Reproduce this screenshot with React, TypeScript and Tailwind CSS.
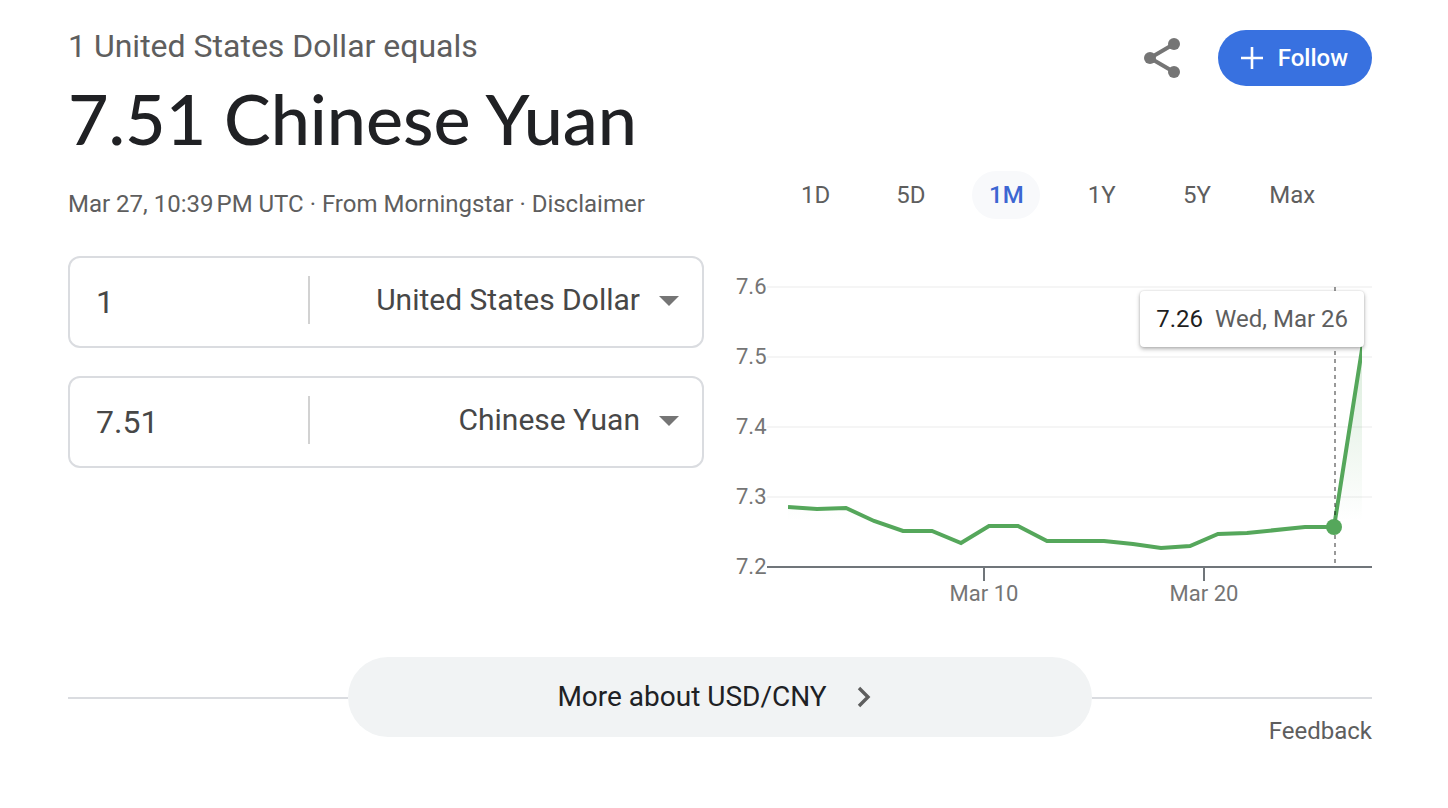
import React, { useState } from 'react';

interface CurrencyFieldProps {
  id: string;
  label: string;
  amount: string;
  currency: string;
}

const CURRENCIES = ['United States Dollar', 'Chinese Yuan', 'Euro', 'Japanese Yen'];
const RANGES = ['1D', '5D', '1M', '1Y', '5Y', 'Max'];

// Horizontal grid lines of the chart, top to bottom
const Y_TICKS = [
  { label: '7.6', y: 28 },
  { label: '7.5', y: 98 },
  { label: '7.4', y: 168 },
  { label: '7.3', y: 238 },
  { label: '7.2', y: 308 },
];

const X_TICKS = [
  { label: 'Mar 10', x: 248 },
  { label: 'Mar 20', x: 468 },
];

const RATE_POINTS =
  '52,248 81,250 110,249 138,262 167,272 196,272 225,284 253,267 282,267 311,282 368,282 397,285 425,289 454,287 482,275 511,274 569,268 598,268 627,84';

const CurrencyField: React.FC<CurrencyFieldProps> = ({ id, label, amount, currency }) => {
  const [value, setValue] = useState(amount);
  const [selected, setSelected] = useState(currency);

  return (
    <div className="flex h-[92px] items-center rounded-xl border-2 border-[#dadce0] pb-1">
      <input
        id={`${id}-amount`}
        aria-label={`${label} amount`}
        value={value}
        onChange={(e) => setValue(e.target.value)}
        className="h-full w-[238px] min-w-0 bg-transparent pt-1 pl-[26px] text-[32px] text-[#474747] outline-none"
      />
      <div className="h-12 w-0.5 shrink-0 bg-[#d2d2d2]" />
      <div className="relative h-full min-w-0 flex-1">
        <select
          id={`${id}-currency`}
          aria-label={`${label} currency`}
          value={selected}
          onChange={(e) => setSelected(e.target.value)}
          className="h-full w-full appearance-none bg-transparent pr-[62px] pb-0.5 text-right text-[30px] text-[#474747] outline-none [text-align-last:right]"
        >
          {CURRENCIES.map((name) => (
            <option key={name}>{name}</option>
          ))}
        </select>
        <svg
          className="pointer-events-none absolute top-0.5 right-[23px] bottom-0 my-auto h-2.5 w-5"
          viewBox="0 0 20 10"
          fill="#757575"
        >
          <path d="M0 0h20L10 10z" />
        </svg>
      </div>
    </div>
  );
};

const RateChart: React.FC = () => (
  <div className="relative">
    <svg className="block w-full" viewBox="0 0 636 360" role="img" aria-label="USD to CNY, 1 month">
      <defs>
        <linearGradient id="rate-fill" gradientUnits="userSpaceOnUse" x1="0" y1="84" x2="0" y2="262">
          <stop offset="0" stopColor="#55a75b" stopOpacity="0.22" />
          <stop offset="1" stopColor="#55a75b" stopOpacity="0" />
        </linearGradient>
        <clipPath id="rate-clip">
          <rect x="52" y="0" width="574" height="308" />
        </clipPath>
      </defs>

      {/* Grid and value labels */}
      {Y_TICKS.map(({ label, y }) => (
        <g key={label}>
          <line x1="31" x2="636" y1={y} y2={y} stroke={label === '7.2' ? '#70757a' : '#f5f5f5'} strokeWidth="2" />
          <text x="0" y={y + 7} fontSize="22" fill="#757575">
            {label}
          </text>
        </g>
      ))}

      {/* Date labels */}
      {X_TICKS.map(({ label, x }) => (
        <g key={label}>
          <line x1={x} x2={x} y1="308" y2="322" stroke="#70757a" strokeWidth="2" />
          <text x={x} y="342" fontSize="22" fill="#757575" textAnchor="middle">
            {label}
          </text>
        </g>
      ))}

      <g clipPath="url(#rate-clip)">
        <polygon points={`${RATE_POINTS} 627,308 52,308`} fill="url(#rate-fill)" />
        <polyline points={RATE_POINTS} fill="none" stroke="#55a75b" strokeWidth="4" />
      </g>

      {/* Crosshair */}
      <line x1="599" x2="599" y1="28" y2="304" stroke="#000" strokeOpacity="0.4" strokeWidth="2" strokeDasharray="4 4" />
      <circle cx="598" cy="268" r="8" fill="#55a75b" />
    </svg>

    <div className="absolute top-8 right-2 flex h-14 items-center gap-3 rounded bg-white px-4 text-2xl whitespace-nowrap shadow-[0_2px_4px_rgba(0,0,0,0.3),0_0_2px_rgba(0,0,0,0.15)]">
      <span className="text-[#1f1f1f]">7.26</span>
      <span className="text-[#5e5e5e]">Wed, Mar 26</span>
    </div>
  </div>
);

export default function App() {
  const [range, setRange] = useState('1M');

  return (
    <main className="bg-white pt-[26px] pr-[76px] pb-[61px] pl-[68px] font-[Roboto,sans-serif]">
      <div className="grid grid-cols-2 gap-8">
        {/* Converter */}
        <section>
          <p className="text-[32px] leading-10 text-[#5e5e5e]">1 United States Dollar equals</p>
          <h1 className="font-[Lato,sans-serif] text-[70px] leading-[104px] font-medium whitespace-nowrap text-[#202124]">
            7.51 Chinese Yuan
          </h1>
          <p className="mt-[18px] text-2xl leading-8 whitespace-nowrap text-[#5e5e5e]">
            Mar 27, 10:39{'\u202f'}PM UTC · From Morningstar · <a href="#disclaimer">Disclaimer</a>
          </p>
          <div className="mt-9 flex flex-col gap-7">
            <CurrencyField id="from" label="From" amount="1" currency="United States Dollar" />
            <CurrencyField id="to" label="To" amount="7.51" currency="Chinese Yuan" />
          </div>
        </section>

        {/* Actions, range picker and chart */}
        <section className="pt-1">
          <div className="flex items-center justify-end gap-8">
            <button type="button" aria-label="Share" className="size-12">
              <svg viewBox="0 0 48 48" fill="#757575" stroke="#757575">
                <path d="M36 10 12 24l24 14" fill="none" strokeWidth="4" />
                <circle cx="36" cy="10" r="6" stroke="none" />
                <circle cx="12" cy="24" r="6" stroke="none" />
                <circle cx="36" cy="38" r="6" stroke="none" />
              </svg>
            </button>
            <button
              type="button"
              className="flex h-14 items-center gap-[15px] rounded-full bg-[#3871e0] pr-6 pl-[23px] text-2xl font-medium text-white"
            >
              <svg className="size-[22px]" viewBox="0 0 22 22" stroke="currentColor" strokeWidth="2.6">
                <path d="M11 0v22M0 11h22" />
              </svg>
              Follow
            </button>
          </div>

          <div className="mx-8 mt-[85px] grid grid-cols-6 justify-items-center">
            {RANGES.map((item) => (
              <button
                key={item}
                type="button"
                aria-pressed={item === range}
                onClick={() => setRange(item)}
                className={`h-12 w-[68px] rounded-full text-2xl ${
                  item === range ? 'bg-[#f8f9fb] font-medium text-[#3c66d2]' : 'text-[#5e5e5e]'
                }`}
              >
                {item}
              </button>
            ))}
          </div>

          <div className="mt-10">
            <RateChart />
          </div>
        </section>
      </div>

      <footer className="mt-[38px]">
        <div className="flex items-center">
          <div className="mt-0.5 h-0.5 flex-1 bg-[#dadce0]" />
          <button
            type="button"
            className="flex h-20 w-[744px] items-center justify-center gap-4 rounded-full bg-[#f1f3f4] text-[28px] text-[#202124]"
          >
            More about USD/CNY
            <svg className="size-10" viewBox="0 0 40 40" fill="none" stroke="#5e5e5e" strokeWidth="3.4">
              <path d="m16 11 9 9-9 9" />
            </svg>
          </button>
          <div className="mt-0.5 h-0.5 flex-1 bg-[#dadce0]" />
        </div>
        <div className="-mt-[22px] text-right text-2xl leading-8 text-[#5e5e5e]">
          <a href="#feedback">Feedback</a>
        </div>
      </footer>
    </main>
  );
}
